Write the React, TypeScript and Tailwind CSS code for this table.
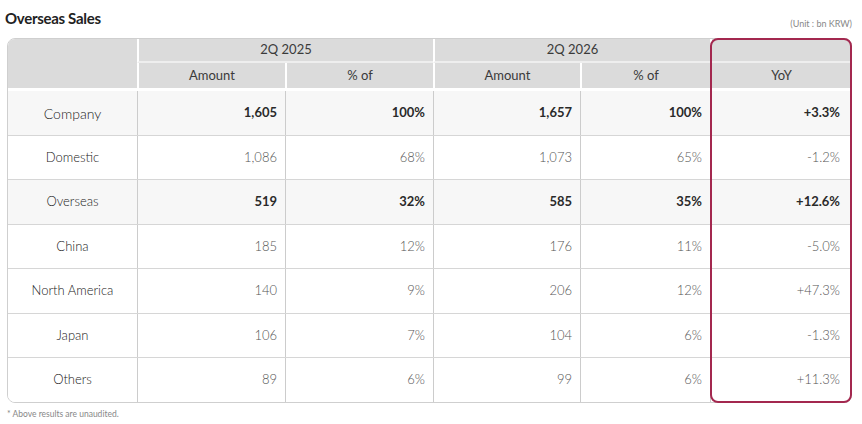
const rows = [
  { label: "Company", v: ["1,605", "100%", "1,657", "100%", "+3.3%"], bold: true, big: true, h: "h-[45px]" },
  { label: "Domestic", v: ["1,086", "68%", "1,073", "65%", "-1.2%"], bold: false, big: false, h: "h-[44px]" },
  { label: "Overseas", v: ["519", "32%", "585", "35%", "+12.6%"], bold: true, big: false, h: "h-[45px]" },
  { label: "China", v: ["185", "12%", "176", "11%", "-5.0%"], bold: false, big: false, h: "h-[44px]" },
  { label: "North America", v: ["140", "9%", "206", "12%", "+47.3%"], bold: false, big: false, h: "h-[45px]" },
  { label: "Japan", v: ["106", "7%", "104", "6%", "-1.3%"], bold: false, big: false, h: "h-[44px]" },
  { label: "Others", v: ["89", "6%", "99", "6%", "+11.3%"], bold: false, big: false, h: "h-[44px]" },
];

export default function App() {
  return (
    <div className="w-[862px] h-[424px] bg-white font-['Lato','Noto_Sans',sans-serif] text-[#333]">
      {/* Title bar */}
      <div className="flex h-[38px] justify-between items-start px-[5px] pr-[10px]">
        <h1 className="mt-[9px] text-[15px] leading-[18px] font-bold text-[#222] tracking-[-0.3px]">Overseas Sales</h1>
        <span className="mt-[19px] text-[9px] leading-[10px] text-[#888]">(Unit : bn KRW)</span>
      </div>

      {/* Table */}
      <div className="relative ml-[7px] w-[845px]">
        <div className="rounded-[8px] border border-[#cfcfcf] overflow-hidden">
          <div className="grid grid-cols-[129px_148px_148px_147px_130px_141px] bg-[#dbdbdb] text-[13px] text-[#3a3a3a]">
            <div className="row-span-2 h-[52px] border-b-[3px] border-white" />
            <div className="col-span-2 h-[24px] flex items-center justify-center border-l-2 border-b-2 border-white border-b-[#eeeeee]">2Q 2025</div>
            <div className="col-span-2 h-[24px] flex items-center justify-center border-l-2 border-b-2 border-white border-b-[#eeeeee]">2Q 2026</div>
            <div className="h-[24px] border-l-2 border-b-2 border-white border-b-[#eeeeee]" />
            <div className="h-[28px] flex items-center justify-center border-l-2 border-b-[3px] border-white">Amount</div>
            <div className="h-[28px] flex items-center justify-center border-l-2 border-b-[3px] border-white">% of</div>
            <div className="h-[28px] flex items-center justify-center border-l-2 border-b-[3px] border-white">Amount</div>
            <div className="h-[28px] flex items-center justify-center border-l-2 border-b-[3px] border-white">% of</div>
            <div className="h-[28px] flex items-center justify-center border-l-2 border-b-[3px] border-white">YoY</div>
          </div>

          {rows.map((r, i) => (
            <div
              key={r.label}
              className={`grid grid-cols-[129px_148px_148px_147px_130px_141px] ${r.h} ${r.bold ? "bg-[#f7f7f7]" : "bg-white"} ${i < rows.length - 1 ? "border-b border-[#d6d6d6]" : ""}`}
            >
              <div className={`flex items-center justify-center font-light ${r.big ? "text-[14px]" : "text-[13px]"} text-[#222]`}>{r.label}</div>
              {r.v.map((v, j) => (
                <div
                  key={j}
                  className={`flex items-center justify-end border-l border-[#cccccc] ${j === 4 ? "pr-[11px]" : "pr-[8px]"} text-[13px] ${r.bold ? "font-bold text-[#2a2a2a]" : "font-light text-[#555]"}`}
                >
                  {v}
                </div>
              ))}
            </div>
          ))}
        </div>

        {/* YoY highlight */}
        <div className="absolute left-[703px] top-0 w-[142px] h-full rounded-[8px] border-2 border-[#a3284f] pointer-events-none" />
      </div>

      <p className="mt-[6px] ml-[7px] text-[8.5px] leading-[10px] text-[#888]">* Above results are unaudited.</p>
    </div>
  );
}
